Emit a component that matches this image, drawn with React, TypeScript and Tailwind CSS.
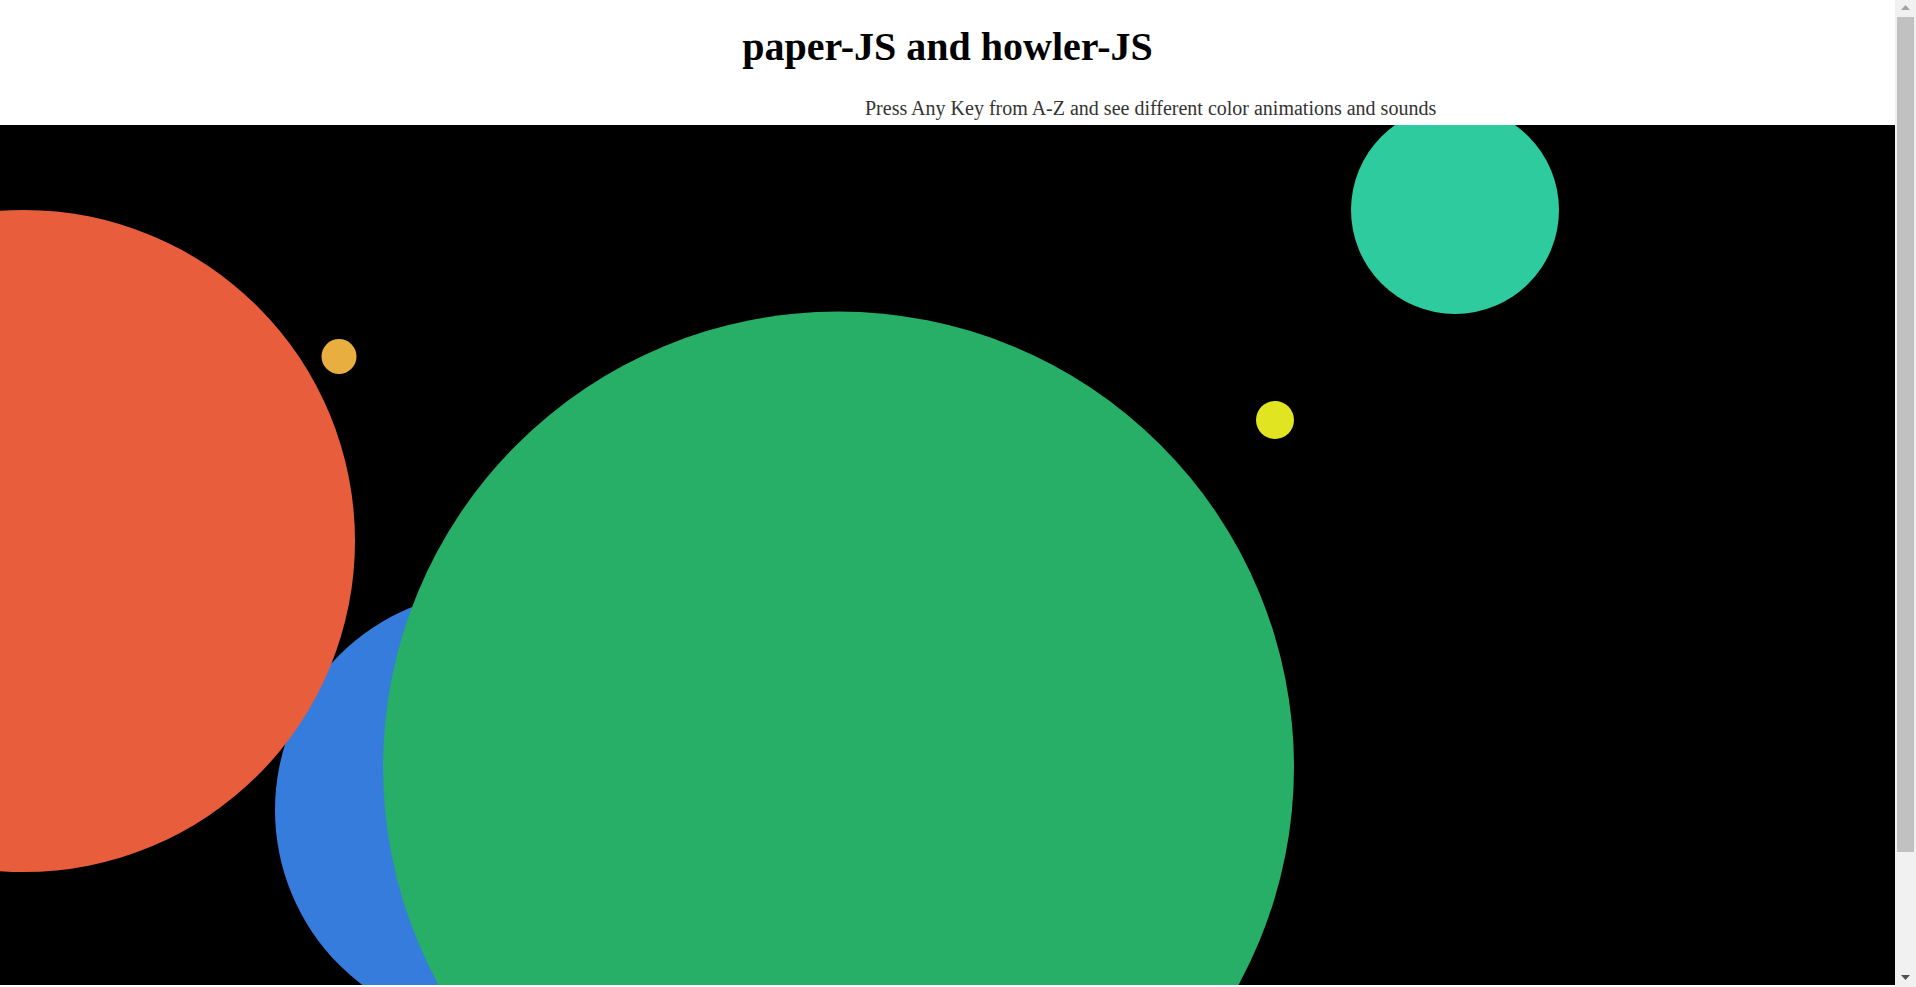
const circles = [
  { cx: 494, cy: 685, r: 219, fill: "#357cdc" },
  { cx: 24, cy: 416, r: 331, fill: "#e85e3d" },
  { cx: 339, cy: 231.5, r: 17.5, fill: "#e8ae3f" },
  { cx: 838.5, cy: 642, r: 455.5, fill: "#27ae67" },
  { cx: 1455, cy: 85, r: 104, fill: "#2ecb9f" },
  { cx: 1275, cy: 295, r: 19, fill: "#e1e421" },
];

function Scrollbar() {
  return (
    <div className="w-[21px] h-full bg-[#f1f1f1] flex flex-col items-center">
      <svg width="21" height="17" viewBox="0 0 21 17" aria-hidden="true">
        <polygon points="6,10 15,10 10.5,5" fill="#a3a3a3" />
      </svg>
      <div className="w-[17px] h-[835px] bg-[#c1c1c1]" />
      <div className="flex-1" />
      <svg width="21" height="17" viewBox="0 0 21 17" aria-hidden="true">
        <polygon points="6,5 15,5 10.5,10" fill="#505050" />
      </svg>
    </div>
  );
}

export default function App() {
  return (
    <div className="flex h-screen overflow-hidden bg-white font-['Liberation_Serif',serif]">
      <main className="flex-1 min-w-0">
        <header className="pt-[24px]">
          <h1 className="text-center text-[40px] leading-[46px] font-bold text-black">
            paper-JS and howler-JS
          </h1>
          <p className="mt-[27px] pl-[865px] text-[20px] leading-[23px] text-[#333]">
            Press Any Key from A-Z and see different color animations and sounds
          </p>
        </header>

        <div className="mt-[5px] h-[860px] bg-black overflow-hidden">
          <svg width="100%" height="860" aria-hidden="true">
            {circles.map((c, i) => (
              <circle key={i} cx={c.cx} cy={c.cy} r={c.r} fill={c.fill} />
            ))}
          </svg>
        </div>
      </main>
      <Scrollbar />
    </div>
  );
}
